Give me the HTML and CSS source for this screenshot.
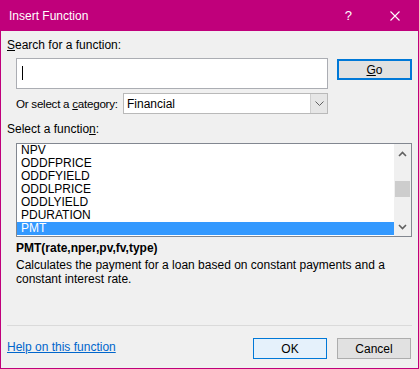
FILE: index.html
```html
<!DOCTYPE html>
<html lang="en">
<head>
    <meta charset="UTF-8">
    <meta name="viewport" content="width=device-width, initial-scale=1.0">
    <title>Insert Function</title>
    <link rel="stylesheet" href="styles.css">
</head>
<body>
    <div class="dialog">
        <div class="titlebar">
            <span class="title">Insert Function</span>
            <span class="help">?</span>
            <svg class="close" width="10" height="10" viewBox="0 0 10 10">
                <path d="M0.5 0.5 L9.5 9.5 M9.5 0.5 L0.5 9.5" stroke="#fff" stroke-width="1.1" fill="none"/>
            </svg>
        </div>

        <div class="content">
            <div class="label"><u>S</u>earch for a function:</div>
            <div class="search-row">
                <div class="search-box"><span class="caret"></span></div>
                <button class="btn btn-go"><u>G</u>o</button>
            </div>

            <div class="category-row">
                <span class="cat-label">Or select a <u>c</u>ategory:</span>
                <div class="select">
                    <span class="select-value">Financial</span>
                    <span class="select-arrow">
                        <svg width="9" height="5" viewBox="0 0 9 5">
                            <path d="M0.5 0.5 L4.5 4.5 L8.5 0.5" stroke="#606060" stroke-width="1" fill="none"/>
                        </svg>
                    </span>
                </div>
            </div>

            <div class="label label-list">Select a functio<u>n</u>:</div>
            <div class="listbox">
                <ul class="items">
                    <li>NPV</li>
                    <li>ODDFPRICE</li>
                    <li>ODDFYIELD</li>
                    <li>ODDLPRICE</li>
                    <li>ODDLYIELD</li>
                    <li>PDURATION</li>
                    <li class="selected">PMT</li>
                </ul>
                <div class="scrollbar">
                    <svg class="arrow" width="9" height="6" viewBox="0 0 9 6">
                        <path d="M1 5 L4.5 1.5 L8 5" stroke="#606060" stroke-width="1.6" fill="none"/>
                    </svg>
                    <div class="track"><div class="thumb"></div></div>
                    <svg class="arrow" width="9" height="6" viewBox="0 0 9 6">
                        <path d="M1 1 L4.5 4.5 L8 1" stroke="#606060" stroke-width="1.6" fill="none"/>
                    </svg>
                </div>
            </div>

            <div class="signature">PMT(rate,nper,pv,fv,type)</div>
            <p class="description">Calculates the payment for a loan based on constant payments and a<br>constant interest rate.</p>
        </div>

        <div class="footer">
            <a href="#" class="help-link">Help on this function</a>
            <div class="buttons">
                <button class="btn btn-ok">OK</button>
                <button class="btn">Cancel</button>
            </div>
        </div>
    </div>
</body>
</html>
```
FILE: styles.css
```css
* {
    box-sizing: border-box;
}
body {
    margin: 0;
    font-family: "Liberation Sans", Arial, sans-serif;
    font-size: 12px;
    color: #000;
    background: #f0f0f0;
}
.dialog {
    width: 419px;
    height: 369px;
    border: 1px solid #c0007b;
    border-top: none;
    background: #f0f0f0;
    display: flex;
    flex-direction: column;
}
.titlebar {
    height: 31px;
    margin: 0 -1px;
    background: #c0007b;
    color: #fff;
    display: flex;
    align-items: center;
    padding-left: 9px;
}
.title {
    font-size: 12px;
    flex: 1;
}
.help {
    font-size: 13px;
    margin-right: 38px;
}
.close {
    margin-right: 19px;
}
.content {
    flex: 1;
    padding: 6px 6px 0 6px;
}
.label {
    line-height: 16px;
}
.search-row {
    display: flex;
    align-items: flex-start;
    margin-top: 5px;
    padding-left: 9px;
}
.search-box {
    width: 312px;
    height: 31px;
    background: #fff;
    border: 1px solid #abadb3;
    padding: 7px 0 0 5px;
}
.caret {
    display: block;
    width: 1px;
    height: 14px;
    background: #000;
}
.btn {
    font-family: inherit;
    font-size: 12px;
    height: 21px;
    width: 74px;
    padding: 0;
    background: #e1e1e1;
    border: 1px solid #adadad;
    color: #000;
}
.btn-go {
    width: 75px;
    margin: 1px 0 0 9px;
    border: 2px solid #0078d7;
}
.category-row {
    display: flex;
    align-items: center;
    margin-top: 4px;
    padding-left: 9px;
}
.cat-label {
    width: 107px;
    flex-shrink: 0;
    white-space: nowrap;
    font-size: 11.6px;
    letter-spacing: -0.25px;
}
.select {
    width: 205px;
    height: 21px;
    background: #fff;
    border: 1px solid #b9b9b9;
    display: flex;
    align-items: center;
}
.select-value {
    flex: 1;
    padding-left: 3px;
}
.select-arrow {
    width: 17px;
    height: 19px;
    background: #e6e6e6;
    border-left: 1px solid #cfcfcf;
    display: flex;
    align-items: center;
    justify-content: center;
}
.label-list {
    margin-top: 7px;
}
.listbox {
    margin: 6px 0 0 9px;
    width: 396px;
    height: 94px;
    background: #fff;
    border: 1px solid #828790;
    display: flex;
}
.items {
    list-style: none;
    margin: 0;
    padding: 0;
    flex: 1;
}
.items li {
    height: 13px;
    line-height: 13px;
    padding-left: 4px;
}
.items li.selected {
    background: #3399ff;
    color: #fff;
}
.scrollbar {
    width: 17px;
    background: #f0f0f0;
    display: flex;
    flex-direction: column;
    align-items: center;
    padding: 7px 0 6px;
}
.track {
    flex: 1;
    width: 100%;
    padding-top: 24px;
}
.thumb {
    width: 15px;
    height: 16px;
    margin-left: 1px;
    background: #cdcdcd;
}
.signature {
    font-weight: bold;
    margin: 3px 0 0 9px;
    line-height: 16px;
}
.description {
    margin: 2px 0 0 9px;
    line-height: 14px;
}
.footer {
    margin: 0 6px;
    border-top: 1px solid #dadada;
    padding: 12px 0 9px;
    display: flex;
    align-items: center;
}
.help-link {
    flex: 1;
    color: #0066cc;
    margin-top: -3px;
}
.buttons {
    display: flex;
    gap: 10px;
    margin-right: 1px;
}
.btn-ok {
    background: #e5f1fb;
    border-color: #0078d7;
}
```
